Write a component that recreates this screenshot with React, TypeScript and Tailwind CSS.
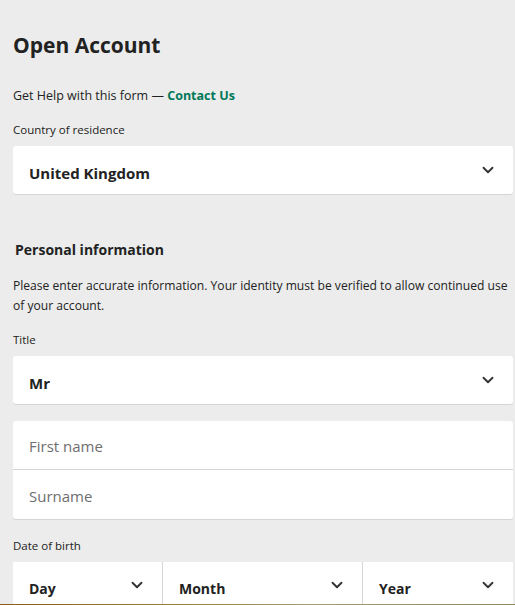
import {ChevronDown} from "lucide-react";

const font = {fontFamily: "'Open Sans', 'Noto Sans', sans-serif"};

function SelectBox({value}: {value: string}) {
  return (
    <div className="flex h-12 items-center justify-between rounded-[3px] bg-white pl-4 pr-4 pt-[6px] shadow-[0_1px_0_#d4d5d4]">
      <span className="text-[15px] font-bold text-[#222]">{value}</span>
      <ChevronDown size={18} strokeWidth={2.5} className="-mt-[6px] text-[#333]"/>
    </div>
  );
}

function DateCell({value, wide}: {value: string; wide?: boolean}) {
  return (
    <div className={`flex items-center justify-between border-r border-[#d6d6d6] bg-white pl-4 pr-4 pt-[4px] last:border-r-0 ${wide ? "w-[40%]" : "w-[30%]"}`}>
      <span className="text-[14px] font-bold text-[#222]">{value}</span>
      <ChevronDown size={18} strokeWidth={2.5} className="-mt-[6px] text-[#333]"/>
    </div>
  );
}

export default function App() {
  return (
    <div className="min-h-[605px] bg-[#ebeceb] pl-[13px] pr-[2px] text-[#222]" style={font}>
      <h1 className="pt-[29px] text-[21px] font-bold leading-[32px]">Open Account</h1>
      <p className="mt-[26px] text-[12.5px] leading-[18px]">
        Get Help with this form — <span className="font-bold text-[#00785a]">Contact Us</span>
      </p>
      <div className="mt-[17px] text-[11.5px] leading-[16px]">Country of residence</div>
      <div className="mt-[8px]">
        <SelectBox value="United Kingdom"/>
      </div>

      <h2 className="mt-[46px] pl-[2px] text-[14px] font-bold leading-[20px]">Personal information</h2>
      <p className="mt-[16px] text-[12.1px] leading-[20px]">
        Please enter accurate information. Your identity must be verified to allow continued use of your account.
      </p>
      <div className="mt-[16px] text-[11.5px] leading-[16px]">Title</div>
      <div className="mt-[8px]">
        <SelectBox value="Mr"/>
      </div>

      <div className="mt-[17px] rounded-[3px] bg-white shadow-[0_1px_0_#d4d5d4]">
        <div className="flex h-[49px] items-center border-b border-[#d6d6d6] pl-4 pt-[3px] text-[15px] text-[#6e6e6e]">First name</div>
        <div className="flex h-[49px] items-center pl-4 pt-[3px] text-[15px] text-[#6e6e6e]">Surname</div>
      </div>

      <div className="mt-[19px] text-[11.5px] leading-[16px]">Date of birth</div>
      <div className="mt-[8px] flex h-12 rounded-t-[3px]">
        <DateCell value="Day"/>
        <DateCell value="Month" wide/>
        <DateCell value="Year"/>
      </div>

      <div className="fixed bottom-0 left-0 h-px w-full bg-[linear-gradient(90deg,#8a5a1c,#9a7a3a_30%,#a59c70_60%,#8e8a5a)]"/>
    </div>
  );
}
